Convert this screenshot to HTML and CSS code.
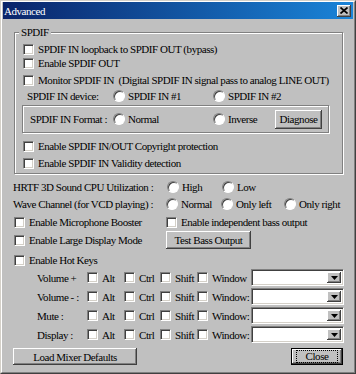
FILE: index.html
```html
<!DOCTYPE html>
<html>
<head>
<meta charset="utf-8">
<title>Advanced</title>
<link rel="stylesheet" href="styles.css">
</head>
<body>
<div class="win">
  <div class="frame">
    <div class="title">
      <span class="title-text">Advanced</span>
      <span class="tbtn"><svg width="8" height="7" viewBox="0 0 8 7"><path d="M0.5 0.5L7.5 6.5M7.5 0.5L0.5 6.5" stroke="#000" stroke-width="1.7" fill="none"/></svg></span>
    </div>
    <div class="content">
      <div class="group">
        <span class="legend">SPDIF</span>
        <div class="row r1"><span class="cb"></span>SPDIF IN loopback to SPDIF OUT (bypass)</div>
        <div class="row r2"><span class="cb"></span>Enable SPDIF OUT</div>
        <div class="row r3"><span class="cb"></span>Monitor SPDIF IN&nbsp; (Digital SPDIF IN signal pass to analog LINE OUT)</div>
        <div class="row r4 device">
          <span class="dev-label">SPDIF IN device:</span>
          <span class="opt w100"><span class="rb"></span>SPDIF IN #1</span>
          <span class="opt"><span class="rb"></span>SPDIF IN #2</span>
        </div>
        <div class="inner">
          <span class="fmt-label">SPDIF IN Format :</span>
          <span class="opt w100"><span class="rb"></span>Normal</span>
          <span class="opt w62"><span class="rb"></span>Inverse</span>
          <span class="btn diag">Diagnose</span>
        </div>
        <div class="row r5"><span class="cb"></span>Enable SPDIF IN/OUT Copyright protection</div>
        <div class="row r6"><span class="cb"></span>Enable SPDIF IN Validity detection</div>
      </div>

      <div class="row hrtf">
        <span class="lbl l154">HRTF 3D Sound CPU Utilization :</span>
        <span class="opt w55"><span class="rb"></span>High</span>
        <span class="opt"><span class="rb"></span>Low</span>
      </div>
      <div class="row wave">
        <span class="lbl l153">Wave Channel (for VCD playing) :</span>
        <span class="opt w55"><span class="rb"></span>Normal</span>
        <span class="opt w63"><span class="rb"></span>Only left</span>
        <span class="opt"><span class="rb"></span>Only right</span>
      </div>
      <div class="row mic">
        <span class="opt w152"><span class="cb"></span>Enable Microphone Booster</span>
        <span class="opt"><span class="cb"></span>Enable independent bass output</span>
      </div>
      <div class="row large">
        <span class="opt w152"><span class="cb"></span>Enable Large Display Mode</span>
        <span class="btn bass">Test Bass Output</span>
      </div>
      <div class="row hot"><span class="cb"></span>Enable Hot Keys</div>

      <div class="hk">
        <span class="hk-label">Volume +</span>
        <span class="opt"><span class="cb"></span>Alt</span>
        <span class="opt"><span class="cb"></span>Ctrl</span>
        <span class="opt"><span class="cb"></span>Shift</span>
        <span class="opt"><span class="cb"></span>Window</span>
        <span class="combo"><span class="drop"><svg width="7" height="4" viewBox="0 0 7 4"><path d="M0 0H7L3.5 4Z" fill="#000"/></svg></span></span>
      </div>
      <div class="hk">
        <span class="hk-label">Volume - :</span>
        <span class="opt"><span class="cb"></span>Alt</span>
        <span class="opt"><span class="cb"></span>Ctrl</span>
        <span class="opt"><span class="cb"></span>Shift</span>
        <span class="opt"><span class="cb"></span>Window:</span>
        <span class="combo"><span class="drop"><svg width="7" height="4" viewBox="0 0 7 4"><path d="M0 0H7L3.5 4Z" fill="#000"/></svg></span></span>
      </div>
      <div class="hk">
        <span class="hk-label">Mute :</span>
        <span class="opt"><span class="cb"></span>Alt</span>
        <span class="opt"><span class="cb"></span>Ctrl</span>
        <span class="opt"><span class="cb"></span>Shift</span>
        <span class="opt"><span class="cb"></span>Window:</span>
        <span class="combo"><span class="drop"><svg width="7" height="4" viewBox="0 0 7 4"><path d="M0 0H7L3.5 4Z" fill="#000"/></svg></span></span>
      </div>
      <div class="hk">
        <span class="hk-label">Display :</span>
        <span class="opt"><span class="cb"></span>Alt</span>
        <span class="opt"><span class="cb"></span>Ctrl</span>
        <span class="opt"><span class="cb"></span>Shift</span>
        <span class="opt"><span class="cb"></span>Window:</span>
        <span class="combo"><span class="drop"><svg width="7" height="4" viewBox="0 0 7 4"><path d="M0 0H7L3.5 4Z" fill="#000"/></svg></span></span>
      </div>

      <div class="buttons">
        <span class="btn load">Load Mixer Defaults</span>
        <span class="btn close"><span class="focus">Close</span></span>
      </div>
    </div>
  </div>
</div>
</body>
</html>
```

FILE: styles.css
```css
* { box-sizing: border-box; }
html, body { margin: 0; padding: 0; }
body {
  width: 356px;
  height: 374px;
  overflow: hidden;
  background: #c0c0c0;
  font-family: "Liberation Serif", "Times New Roman", serif;
  font-size: 11px;
  letter-spacing: -0.45px;
  color: #000;
}
.win {
  width: 356px;
  height: 374px;
  border: 1px solid;
  border-color: #d4d0c8 #404040 #404040 #d4d0c8;
}
.frame {
  height: 100%;
  border: 1px solid;
  border-color: #fff #808080 #808080 #fff;
  display: flex;
  flex-direction: column;
}
.title {
  height: 17px;
  margin: 0 1px;
  padding: 0 2px 0 1px;
  background: linear-gradient(to right, #0a246a, #1a84d8);
  color: #fff;
  display: flex;
  align-items: center;
  justify-content: space-between;
}
.title-text { font-size: 11px; }
.tbtn {
  width: 14px;
  height: 12px;
  background: #c0c0c0;
  box-shadow: inset -1px -1px #404040, inset 1px 1px #fff, inset -2px -2px #808080;
  display: flex;
  align-items: center;
  justify-content: center;
}
.content {
  flex: 1;
  padding: 0 11px 0 12px;
}
.group {
  margin-top: 13px;
  border: 1px solid #808080;
  box-shadow: inset 1px 1px #fff, 1px 1px #fff;
  padding: 0 0 3px 8px;
}
.legend {
  display: block;
  width: max-content;
  height: 14px;
  line-height: 14px;
  margin: -8px 0 0 -4px;
  padding: 0 2px;
  background: #c0c0c0;
}
.row {
  display: flex;
  align-items: center;
  height: 14px;
  white-space: nowrap;
}
.r1 { margin-top: 3px; }
.r3 { margin-top: 3px; }
.r4 { margin-top: 2px; }
.r5 { margin-top: 6px; }
.r6 { margin-top: 3px; }
.device { padding-left: 4px; }
.dev-label { width: 86px; flex: none; }
.inner {
  margin: 2px 0 0 -1px;
  width: 307px;
  height: 28px;
  border: 1px solid #808080;
  box-shadow: inset 1px 1px #fff, 1px 1px #fff;
  padding-left: 7px;
  display: flex;
  align-items: center;
  white-space: nowrap;
}
.fmt-label { width: 83px; flex: none; }
.opt {
  display: flex;
  align-items: center;
  flex: none;
  white-space: nowrap;
}
.w100 { width: 100px; }
.w62 { width: 62px; }
.w55 { width: 55px; }
.w63 { width: 63px; }
.w152 { width: 152px; }
.lbl { flex: none; }
.l154 { width: 154px; }
.l153 { width: 153px; }
.cb {
  width: 11px;
  height: 11px;
  flex: none;
  background: #fff;
  border: 1px solid;
  border-color: #808080 #fff #fff #808080;
  box-shadow: inset 1px 1px #404040, inset -1px -1px #d4d0c8;
  margin-right: 4px;
}
.rb {
  width: 12px;
  height: 12px;
  flex: none;
  border-radius: 50%;
  background: #fff;
  border: 1px solid;
  border-color: #808080 #fff #fff #808080;
  box-shadow: inset 1px 1px #404040;
  margin-right: 3px;
}
.btn {
  display: flex;
  align-items: center;
  justify-content: center;
  flex: none;
  background: #c0c0c0;
  box-shadow: inset -1px -1px #404040, inset 1px 1px #fff, inset -2px -2px #808080;
  white-space: nowrap;
}
.diag { width: 47px; height: 19px; }
.hrtf { margin-top: 6px; margin-left: -1px; }
.wave { margin-top: 3px; margin-left: -1px; }
.mic { margin-top: 4px; }
.large { margin-top: 2px; height: 18px; }
.bass { width: 85px; height: 18px; }
.hot { margin-top: 4px; }
.hk {
  display: grid;
  grid-template-columns: 50px 37px 36px 37px 54px 93px;
  align-items: center;
  height: 17px;
  margin: 2px 0 0 23px;
  white-space: nowrap;
}
.combo {
  height: 17px;
  background: #fff;
  border: 1px solid;
  border-color: #808080 #fff #fff #808080;
  box-shadow: inset 1px 1px #404040, inset -1px -1px #d4d0c8;
  padding: 2px;
  display: flex;
  justify-content: flex-end;
}
.drop {
  width: 14px;
  height: 100%;
  background: #c0c0c0;
  box-shadow: inset -1px -1px #404040, inset 1px 1px #fff, inset -2px -2px #808080;
  display: flex;
  align-items: center;
  justify-content: center;
}
.buttons {
  margin: 5px 0 0 -1px;
  display: flex;
  justify-content: space-between;
}
.load { width: 124px; height: 17px; }
.close {
  width: 52px;
  height: 17px;
  border: 1px solid #000;
}
.focus {
  display: block;
  width: 42px;
  height: 13px;
  line-height: 11px;
  text-align: center;
  border: 1px dotted #000;
}
```
